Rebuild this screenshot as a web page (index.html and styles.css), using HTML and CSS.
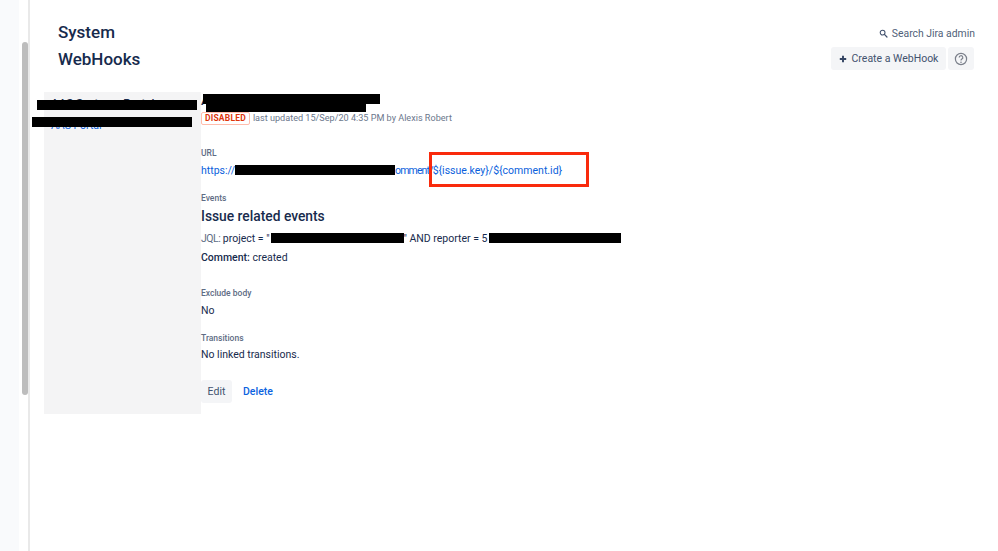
FILE: index.html
```html
<!DOCTYPE html>
<html lang="en">
<head>
<meta charset="utf-8">
<title>System WebHooks</title>
<link rel="stylesheet" href="styles.css">
</head>
<body>
<div class="app">
  <div class="rail"></div>
  <div class="track"><div class="thumb"></div></div>
  <main class="main">
    <header class="head">
      <div class="titles">
        <div class="title">System</div>
        <h1 class="title second">WebHooks</h1>
      </div>
      <div class="tools">
        <div class="search">
          <svg class="search-icon" viewBox="0 0 12 12" aria-hidden="true"><circle cx="4.8" cy="4.8" r="3.2" fill="none" stroke="#42526e" stroke-width="1.4"/><path d="M7.2 7.2 10.6 10.6" stroke="#42526e" stroke-width="1.7" stroke-linecap="round"/></svg>
          <span>Search Jira admin</span>
        </div>
        <div class="actions">
          <button class="btn create"><svg class="plus" viewBox="0 0 10 10" aria-hidden="true"><path d="M5 1v8M1 5h8" stroke="#344563" stroke-width="2.4"/></svg>Create a WebHook</button>
          <button class="btn help" aria-label="Help"><svg viewBox="0 0 14 14" class="help-icon" aria-hidden="true"><circle cx="7" cy="7" r="5.6" fill="none" stroke="#7a7f8a" stroke-width="1.2"/><path d="M5.2 5.6a1.8 1.8 0 1 1 2.7 1.5c-.6.4-.9.7-.9 1.3" fill="none" stroke="#7a7f8a" stroke-width="1.2"/><circle cx="7" cy="10.2" r=".8" fill="#7a7f8a"/></svg></button>
        </div>
      </div>
    </header>
    <div class="body">
      <aside class="side">
        <div class="side-name">AAS Systems Portal</div>
        <a class="side-link">AAS Portal</a>
      </aside>
      <section class="detail">
        <h2 class="name">AAS Systems Portal</h2>
        <div class="status"><span class="lozenge">DISABLED</span><span class="updated">last updated 15/Sep/20 4:35 PM by Alexis Robert</span></div>
        <div class="label url-label">URL</div>
        <a class="url">https://<span class="redact w-url"></span><span class="url-tail">omment/</span>${issue.key}/${comment.id}</a>
        <div class="label events-label">Events</div>
        <h3 class="group">Issue related events</h3>
        <div class="jql"><span class="jql-key">JQL:</span> project = "<span class="redact w-project"></span>" AND reporter = 5<span class="redact w-reporter"></span></div>
        <div class="comment"><b>Comment:</b> created</div>
        <div class="label exclude-label">Exclude body</div>
        <div class="value">No</div>
        <div class="label trans-label">Transitions</div>
        <div class="value tight">No linked transitions.</div>
        <div class="row">
          <button class="btn edit">Edit</button>
          <a class="delete">Delete</a>
        </div>
      </section>
    </div>
  </main>
  <div class="mark r1"></div>
  <div class="mark r2"></div>
  <div class="mark r3"></div>
  <div class="mark r4"></div>
  <div class="callout"></div>
</div>
</body>
</html>
```
FILE: styles.css
```css
* { box-sizing: border-box; }
html, body { margin: 0; height: 100%; overflow: hidden; background: #fff; }
body { font-family: Roboto, "Liberation Sans", sans-serif; color: #172b4d; font-size: 10.5px; }
.app { display: flex; height: 551px; position: relative; }
.rail { width: 19px; background: #f9fafc; }
.track { width: 11px; padding: 42px 2px 0 3px; border-right: 2px solid #e9e9e9; }
.thumb { width: 6px; height: 353px; border-radius: 3px; background: #bdbdbd; }
.main { flex: 1; min-width: 0; }

.head { display: flex; justify-content: space-between; padding: 19px 23px 0 28px; height: 92px; }
.title { font-size: 17px; font-weight: 500; color: #172b4d; line-height: 27px; margin: 0; }
.tools { display: flex; flex-direction: column; align-items: flex-end; }
.search { display: flex; align-items: center; gap: 4px; height: 28px; color: #505f79; font-size: 10.4px; }
.search-icon { width: 9px; height: 9px; }
.actions { display: flex; gap: 2px; margin-right: 1px; }
.btn { border: 0; background: #f4f5f7; border-radius: 3px; font: inherit; color: #42526e; padding: 0; height: 23px; }
.create { display: flex; align-items: center; gap: 5px; width: 115px; justify-content: center; }
.plus { width: 8px; height: 8px; }
.help { width: 26px; display: flex; align-items: center; justify-content: center; }
.help-icon { width: 14px; height: 14px; }

.body { display: flex; padding-left: 14px; }
.side { width: 157px; height: 322px; background: #f4f4f5; padding: 4px 0 0 7px; }
.side-name { font-size: 11.5px; font-weight: 500; line-height: 14px; }
.side-link { display: block; margin-top: 9px; color: #0b63e0; }
.detail { flex: 1; min-width: 0; }
.name { margin: 0; height: 18px; font-size: 13px; font-weight: 500; line-height: 18px; }
.status { display: flex; align-items: center; height: 16px; gap: 3px; }
.lozenge { border: 1px solid #ffbdad; border-radius: 2px; color: #de350b; font-size: 8.5px; font-weight: 700; line-height: 11px; padding: 0 3px; letter-spacing: .2px; }
.updated { color: #6b778c; font-size: 9.1px; }
.label { color: #5e6c84; font-size: 8.5px; font-weight: 500; line-height: 12px; }
.url-label { margin-top: 21px; }
.url { display: block; color: #0b5fdc; white-space: nowrap; margin-top: 5px; line-height: 14px; }
.url-tail { letter-spacing: -.85px; }
.redact { display: inline-block; height: 10px; background: #000; vertical-align: -1px; }
.w-url { width: 160px; }
.w-project { width: 133px; margin-left: 1px; }
.w-reporter { width: 132px; margin-left: 2px; }
.events-label { margin-top: 14px; }
.group { margin: 3px 0 0; font-size: 13.8px; font-weight: 500; line-height: 18px; }
.jql { margin-top: 7px; line-height: 14px; white-space: nowrap; }
.jql-key { color: #5e6c84; letter-spacing: -.5px; }
.comment { margin-top: 5px; line-height: 14px; }
.comment b { font-weight: 500; }
.exclude-label { margin-top: 22px; }
.value { margin-top: 5px; line-height: 14px; }
.value.tight { margin-top: 4px; }
.trans-label { margin-top: 14px; }
.row { display: flex; align-items: center; gap: 11px; margin-top: 18px; }
.edit { width: 31px; }
.delete { color: #0b63e0; font-weight: 500; }

.mark { position: absolute; background: #000; }
.r1 { left: 37px; top: 100px; width: 160px; height: 10px; }
.r2 { left: 32px; top: 117px; width: 160px; height: 10px; }
.r3 { left: 203px; top: 94px; width: 177px; height: 10px; }
.r4 { left: 206px; top: 103px; width: 160px; height: 9px; }
.callout { position: absolute; left: 429px; top: 152px; width: 160px; height: 35px; border: 3px solid #f92a0c; }
```
